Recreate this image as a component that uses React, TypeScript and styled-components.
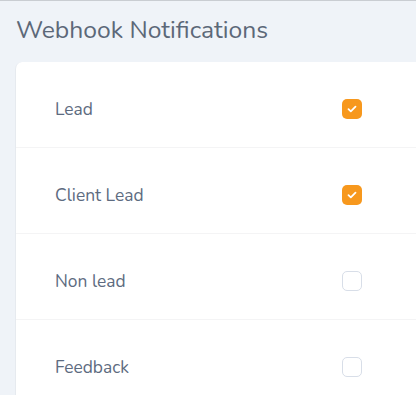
import React from "react";
import styled, { createGlobalStyle } from "styled-components";

const Global = createGlobalStyle`
  html, body { margin: 0; padding: 0; }
  body {
    background: #eff3f8;
    font-family: Nunito, Lato, "Open Sans", sans-serif;
    border-top: 1px solid #c9cdd2;
    overflow: hidden;
  }
`;

const Page = styled.div`
  padding: 13px 0 0 15px;
`;

const Title = styled.h1`
  margin: 0 0 0 1px;
  font-size: 24.7px;
  font-weight: 400;
  color: #5c6878;
  line-height: 32px;
`;

const Card = styled.div`
  margin-top: 16px;
  background: #ffffff;
  border-radius: 7px 0 0 0;
  border-left: 1px solid #e6eaef;
  width: 420px;
`;

const Row = styled.div<{ $last?: boolean }>`
  display: flex;
  align-items: center;
  height: 86px;
  padding: 8px 0 0 39px;
  border-bottom: ${(p) => (p.$last ? "none" : "1px solid #f4f4f5")};
  box-sizing: border-box;
`;

const Label = styled.span`
  width: 287px;
  font-size: 17.4px;
  color: #5d6b80;
`;

const Box = styled.span<{ $on: boolean }>`
  width: 20px;
  height: 20px;
  box-sizing: border-box;
  border-radius: 5px;
  display: flex;
  align-items: center;
  justify-content: center;
  background: ${(p) => (p.$on ? "#f7981d" : "#ffffff")};
  border: ${(p) => (p.$on ? "none" : "1.5px solid #d8dee8")};
`;

const items = [
  { label: "Lead", on: true },
  { label: "Client Lead", on: true },
  { label: "Non lead", on: false },
  { label: "Feedback", on: false },
];

export default function App() {
  return (
    <>
      <Global />
      <Page>
        <Title>Webhook Notifications</Title>
        <Card>
          {items.map((it, i) => (
            <Row key={it.label} $last={i === items.length - 1}>
              <Label>{it.label}</Label>
              <Box $on={it.on}>
                {it.on && (
                  <svg width="10" height="8" viewBox="0 0 10 8">
                    <path d="M1.5 4.2 L3.8 6.3 L8.5 1.6" fill="none" stroke="#fff" strokeWidth="1.8" strokeLinecap="round" strokeLinejoin="round" />
                  </svg>
                )}
              </Box>
            </Row>
          ))}
        </Card>
      </Page>
    </>
  );
}
